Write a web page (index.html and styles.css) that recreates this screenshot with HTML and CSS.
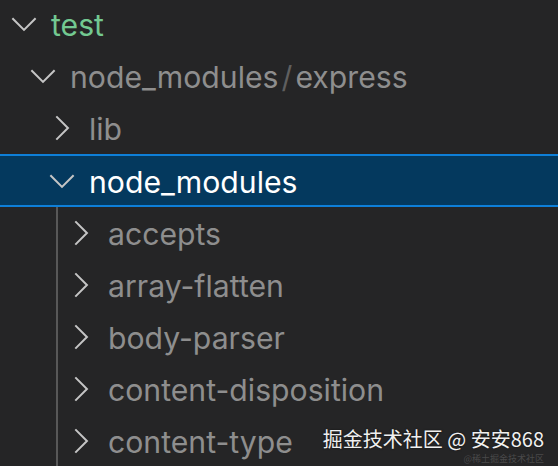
FILE: index.html
```html
<!DOCTYPE html>
<html lang="zh">
<head>
<meta charset="utf-8">
<title>Explorer</title>
<link rel="stylesheet" href="styles.css">
</head>
<body>
<div class="tree">
  <div class="row lvl0">
    <svg class="chev" viewBox="0 0 16 16"><polyline points="3.1,5.6 8,10.5 12.9,5.6"/></svg>
    <span class="label green">test</span>
  </div>
  <div class="row lvl1">
    <svg class="chev" viewBox="0 0 16 16"><polyline points="3.1,5.6 8,10.5 12.9,5.6"/></svg>
    <span class="label dim">node_modules<span class="sep">/</span>express</span>
  </div>
  <div class="row lvl2">
    <svg class="chev" viewBox="0 0 16 16"><polyline points="5.6,3.1 10.5,8 5.6,12.9"/></svg>
    <span class="label dim">lib</span>
  </div>
  <div class="row lvl2 selected">
    <svg class="chev" viewBox="0 0 16 16"><polyline points="3.1,5.6 8,10.5 12.9,5.6"/></svg>
    <span class="label white">node_modules</span>
  </div>
  <div class="children">
    <div class="row lvl3">
      <svg class="chev" viewBox="0 0 16 16"><polyline points="5.6,3.1 10.5,8 5.6,12.9"/></svg>
      <span class="label dim">accepts</span>
    </div>
    <div class="row lvl3">
      <svg class="chev" viewBox="0 0 16 16"><polyline points="5.6,3.1 10.5,8 5.6,12.9"/></svg>
      <span class="label dim">array-flatten</span>
    </div>
    <div class="row lvl3">
      <svg class="chev" viewBox="0 0 16 16"><polyline points="5.6,3.1 10.5,8 5.6,12.9"/></svg>
      <span class="label dim">body-parser</span>
    </div>
    <div class="row lvl3">
      <svg class="chev" viewBox="0 0 16 16"><polyline points="5.6,3.1 10.5,8 5.6,12.9"/></svg>
      <span class="label dim">content-disposition</span>
    </div>
    <div class="row lvl3">
      <svg class="chev" viewBox="0 0 16 16"><polyline points="5.6,3.1 10.5,8 5.6,12.9"/></svg>
      <span class="label dim">content-type</span>
    </div>
  </div>
</div>
<div class="watermark">
  <span class="wm-main">掘金技术社区 @ 安安868</span>
  <span class="wm-faint">@稀土掘金技术社区</span>
</div>
</body>
</html>
```

FILE: styles.css
```css
html, body {
  margin: 0;
  padding: 0;
  width: 558px;
  height: 466px;
  overflow: hidden;
  background: #252526;
}

.tree {
  margin-top: -2px;
  font-family: Inter, "Noto Sans", sans-serif;
  font-size: 30.2px;
}

.row {
  display: flex;
  align-items: center;
  height: 52px;
  box-sizing: border-box;
  white-space: nowrap;
}

.chev {
  width: 38px;
  height: 38px;
  flex: none;
  margin-right: 8px;
}

.chev polyline {
  fill: none;
  stroke: #c5c5c5;
  stroke-width: 0.85;
}

.lvl0 { padding-left: 5px; }
.lvl1 { padding-left: 24px; }
.lvl2 { padding-left: 43px; }
.lvl3 { padding-left: 62px; }

.label {
  line-height: 52px;
  position: relative;
  top: 1px;
}
.green { color: #73c991; }
.dim { color: #8e8e8e; }
.white { color: #ffffff; }

.sep {
  color: #5f5f5f;
  margin: 0 3px;
}

.selected {
  background: #04395e;
  border-top: 2px solid #0e7fd8;
  border-bottom: 2px solid #0e7fd8;
  height: 53px;
}

.children {
  margin-left: 56px;
  border-left: 2px solid #585858;
}

.children .lvl3 { padding-left: 4px; }

.watermark {
  position: absolute;
  right: 14px;
  bottom: 2px;
  display: flex;
  flex-direction: column;
  align-items: flex-end;
  gap: 3px;
  font-family: "Noto Sans CJK SC", sans-serif;
}

.wm-main {
  font-size: 20px;
  line-height: 24px;
  color: #f0f0f0;
  text-shadow: 0 0 2px rgba(0,0,0,0.6);
}

.wm-faint {
  font-size: 9px;
  line-height: 10px;
  color: rgba(130,130,130,0.4);
  white-space: nowrap;
}
```
